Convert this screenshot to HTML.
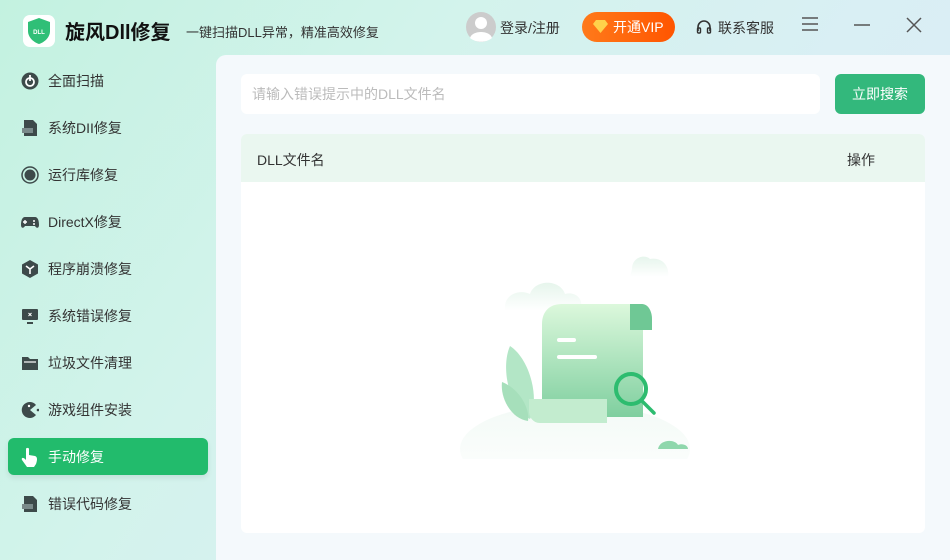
<!DOCTYPE html>
<html><head><meta charset="utf-8"><style>
*{margin:0;padding:0;box-sizing:border-box}
html{width:950px;height:560px;overflow:hidden}
body{width:950px;height:560px;overflow:hidden;font-family:"Liberation Sans","Noto Sans CJK SC",sans-serif;background:linear-gradient(125deg,#c3f2e0 0%,#d3f3ec 35%,#d9eff4 65%,#dcebf8 100%);position:relative;color:#333}
.logo{position:absolute;left:23px;top:15px;width:32px;height:32px;background:#fff;border-radius:7px}
.title{position:absolute;left:65px;top:16px;font-size:20px;font-weight:bold;color:#111}
.sub{position:absolute;left:186px;top:22px;font-size:13px;color:#333}
.nav{position:absolute;left:0;width:216px}
.item{position:absolute;left:8px;width:200px;height:37px;display:flex;align-items:center;font-size:14px;color:#333}
.item svg{margin-left:13px;margin-right:9px}
.item.act{background:#22bb6c;color:#fff;border-radius:6px;box-shadow:0 3px 6px rgba(0,0,0,.08)}
.main{position:absolute;left:216px;top:55px;width:734px;height:505px;background:#f4f9fc;border-radius:10px 0 0 0}
.inp{position:absolute;left:25px;top:19px;width:579px;height:40px;background:#fff;border-radius:6px;font-size:14px;color:#bbb;padding:12px 11px;line-height:16px}
.btn{position:absolute;left:619px;top:19px;width:90px;height:40px;background:#33b87c;border-radius:6px;color:#fff;font-size:14px;text-align:center;line-height:40px}
.card{position:absolute;left:25px;top:79px;width:684px;height:399px;background:#fff;border-radius:6px;overflow:hidden}
.th{height:48px;background:#eaf7f0;font-size:14px;color:#333;position:relative}
</style></head><body>
<div class="logo"><svg width="32" height="32" viewBox="0 0 32 32"><path d="M16 3 L27 7 V16 C27 22 22 27 16 29 C10 27 5 22 5 16 V7 Z" fill="#2fbf77"/><text x="16" y="19" font-size="6" fill="#fff" text-anchor="middle" font-family="Liberation Sans" font-weight="bold">DLL</text></svg></div>
<div class="title">旋风Dll修复</div>
<div class="sub">一键扫描DLL异常，精准高效修复</div>
<svg style="position:absolute;left:466px;top:12px" width="30" height="30" viewBox="0 0 30 30"><circle cx="15" cy="15" r="15" fill="#ccc"/><circle cx="15" cy="11" r="6" fill="#fff"/><path d="M4 26 C6 18 24 18 26 26 C20 31 10 31 4 26Z" fill="#fff"/></svg>
<div style="position:absolute;left:500px;top:18px;font-size:14px;color:#333">登录/注册</div>
<div style="position:absolute;left:582px;top:12px;width:93px;height:30px;border-radius:15px;background:linear-gradient(90deg,#ff7a1a,#ff5500);color:#fff;font-size:14px;line-height:30px;padding-left:31px">开通VIP</div>
<svg style="position:absolute;left:593px;top:20px" width="15" height="13" viewBox="0 0 15 13"><path d="M3 0 H12 L15 4 L7.5 13 L0 4Z" fill="#ffd24a"/></svg>
<svg style="position:absolute;left:696px;top:19px" width="16" height="16" viewBox="0 0 16 16"><path d="M2 12 V8 A6 6 0 0 1 14 8 V12" fill="none" stroke="#333" stroke-width="1.6"/><rect x="1.5" y="9" width="3" height="5" rx="1" fill="none" stroke="#333" stroke-width="1.4"/><rect x="11.5" y="9" width="3" height="5" rx="1" fill="none" stroke="#333" stroke-width="1.4"/></svg>
<div style="position:absolute;left:718px;top:18px;font-size:14px;color:#333">联系客服</div>
<svg style="position:absolute;left:801px;top:16px" width="18" height="16"><path d="M1 2H17M1 8H17M1 14H17" stroke="#555" stroke-width="1.5"/></svg>
<svg style="position:absolute;left:853px;top:16px" width="18" height="16"><path d="M1 9H17" stroke="#555" stroke-width="1.5"/></svg>
<svg style="position:absolute;left:905px;top:16px" width="18" height="18"><path d="M2 2L16 16M16 2L2 16" stroke="#555" stroke-width="1.5"/></svg>

<div class="nav">
<div class="item" style="top:62px"><svg width="18" height="18" viewBox="0 0 18 18"><circle cx="9" cy="9" r="8.5" fill="#3d4a4a"/><circle cx="9" cy="10" r="4" fill="none" stroke="#fff" stroke-width="1.8"/><path d="M9 3V9" stroke="#fff" stroke-width="1.8"/></svg>全面扫描</div>
<div class="item" style="top:109px"><svg width="18" height="18" viewBox="0 0 18 18"><path d="M3 1H12L16 5V17H3Z" fill="#3d4a4a"/><rect x="1" y="9" width="11" height="5" fill="#7a8a8a"/></svg>系统DII修复</div>
<div class="item" style="top:156px"><svg width="18" height="18" viewBox="0 0 18 18"><circle cx="9" cy="9" r="8" fill="none" stroke="#3d4a4a" stroke-width="1.5"/><circle cx="9" cy="9" r="5.5" fill="#3d4a4a"/></svg>运行库修复</div>
<div class="item" style="top:203px"><svg width="18" height="18" viewBox="0 0 18 18"><path d="M4 4H14C17 4 18 8 18 12C18 15 16 16 14 13H4C2 16 0 15 0 12C0 8 1 4 4 4Z" fill="#3d4a4a"/><path d="M4 7V11M2 9H6" stroke="#fff" stroke-width="1.4"/><circle cx="13" cy="8" r="1" fill="#fff"/><circle cx="13" cy="11" r="1" fill="#fff"/></svg>DirectX修复</div>
<div class="item" style="top:250px"><svg width="18" height="18" viewBox="0 0 18 18"><path d="M9 0L17 4.5V13.5L9 18L1 13.5V4.5Z" fill="#3d4a4a"/><path d="M5 6L9 9L13 6M9 9V14" stroke="#fff" stroke-width="1.6" fill="none"/></svg>程序崩溃修复</div>
<div class="item" style="top:297px"><svg width="18" height="18" viewBox="0 0 18 18"><rect x="1" y="2" width="16" height="11" rx="1" fill="#3d4a4a"/><path d="M6 16H12" stroke="#3d4a4a" stroke-width="2"/><path d="M7.5 6L10.5 9M10.5 6L7.5 9" stroke="#fff" stroke-width="1"/></svg>系统错误修复</div>
<div class="item" style="top:344px"><svg width="18" height="18" viewBox="0 0 18 18"><path d="M1 3H7L9 5H17V16H1Z" fill="#3d4a4a"/><path d="M3 8H15" stroke="#fff" stroke-width="1.2"/></svg>垃圾文件清理</div>
<div class="item" style="top:391px"><svg width="18" height="18" viewBox="0 0 18 18"><path d="M15 4A8 8 0 1 0 15 14L9 9Z" fill="#3d4a4a"/><circle cx="17" cy="9" r="1.3" fill="#3d4a4a"/><circle cx="8" cy="5" r="1.2" fill="#fff"/></svg>游戏组件安装</div>
<div class="item act" style="top:438px"><svg width="18" height="20" viewBox="0 0 18 20"><path d="M5 2C5 0.5 8 0.5 8 2V8L14 9C17 10 16 14 15 17L13 20H6L1 13C0 11 2 10 4 12L5 13Z" fill="#fff"/></svg>手动修复</div>
<div class="item" style="top:485px"><svg width="18" height="18" viewBox="0 0 18 18"><path d="M3 1H12L16 5V17H3Z" fill="#3d4a4a"/><rect x="1" y="9" width="11" height="5" fill="#7a8a8a"/></svg>错误代码修复</div>
</div>

<div class="main">
<div class="inp">请输入错误提示中的DLL文件名</div>
<div class="btn">立即搜索</div>
<div class="card">
<div class="th"><span style="position:absolute;left:16px;top:16px">DLL文件名</span><span style="position:absolute;left:606px;top:16px">操作</span></div>
<svg style="position:absolute;left:209px;top:115px" width="260" height="210" viewBox="0 0 260 210">
<defs><linearGradient id="g1" x1="0" y1="0" x2="0" y2="1"><stop offset="0" stop-color="#dcf8dc"/><stop offset="1" stop-color="#7fcf9f"/></linearGradient>
<linearGradient id="g2" x1="0" y1="0" x2="0" y2="1"><stop offset="0" stop-color="#f3faf6"/><stop offset="1" stop-color="#ffffff"/></linearGradient>
<linearGradient id="g3" x1="0" y1="0" x2="0" y2="1"><stop offset="0" stop-color="#e6f5ec"/><stop offset="1" stop-color="#ffffff"/></linearGradient></defs>
<ellipse cx="125" cy="200" rx="115" ry="45" fill="url(#g2)"/>
<path d="M55 58C55 45 70 40 80 45C85 30 110 30 115 45C125 42 135 50 130 62H55Z" fill="url(#g3)"/>
<path d="M182 20C182 8 195 5 200 10C210 8 220 15 218 28H180Z" fill="url(#g3)"/>
<path d="M60 97C80 110 90 150 80 170C60 160 50 120 60 97Z" fill="#b3e6c6"/>
<path d="M52 133C70 140 80 160 78 172C62 170 50 150 52 133Z" fill="#a6dfbb"/>
<path d="M92 75C92 62 100 55 112 55H193V168H92Z" fill="url(#g1)"/>
<path d="M180 55H192C198 55 202 62 202 70V81H180Z" fill="#6fc895"/>
<rect x="107" y="89" width="19" height="4" rx="2" fill="#fff"/>
<rect x="107" y="106" width="40" height="4" rx="2" fill="#fff"/>
<path d="M79 150H157V174H90C83 174 79 168 79 162Z" fill="#c3eccf"/>
<circle cx="181" cy="140" r="15" fill="none" stroke="#2dbc6f" stroke-width="4"/>
<path d="M192 152L204 164" stroke="#2dbc6f" stroke-width="3.5" stroke-linecap="round"/>
<path d="M208 200C210 190 225 190 228 196C232 194 238 196 238 200Z" fill="#8fd7ac"/>
</svg>
</div>
</div>
</body></html>
